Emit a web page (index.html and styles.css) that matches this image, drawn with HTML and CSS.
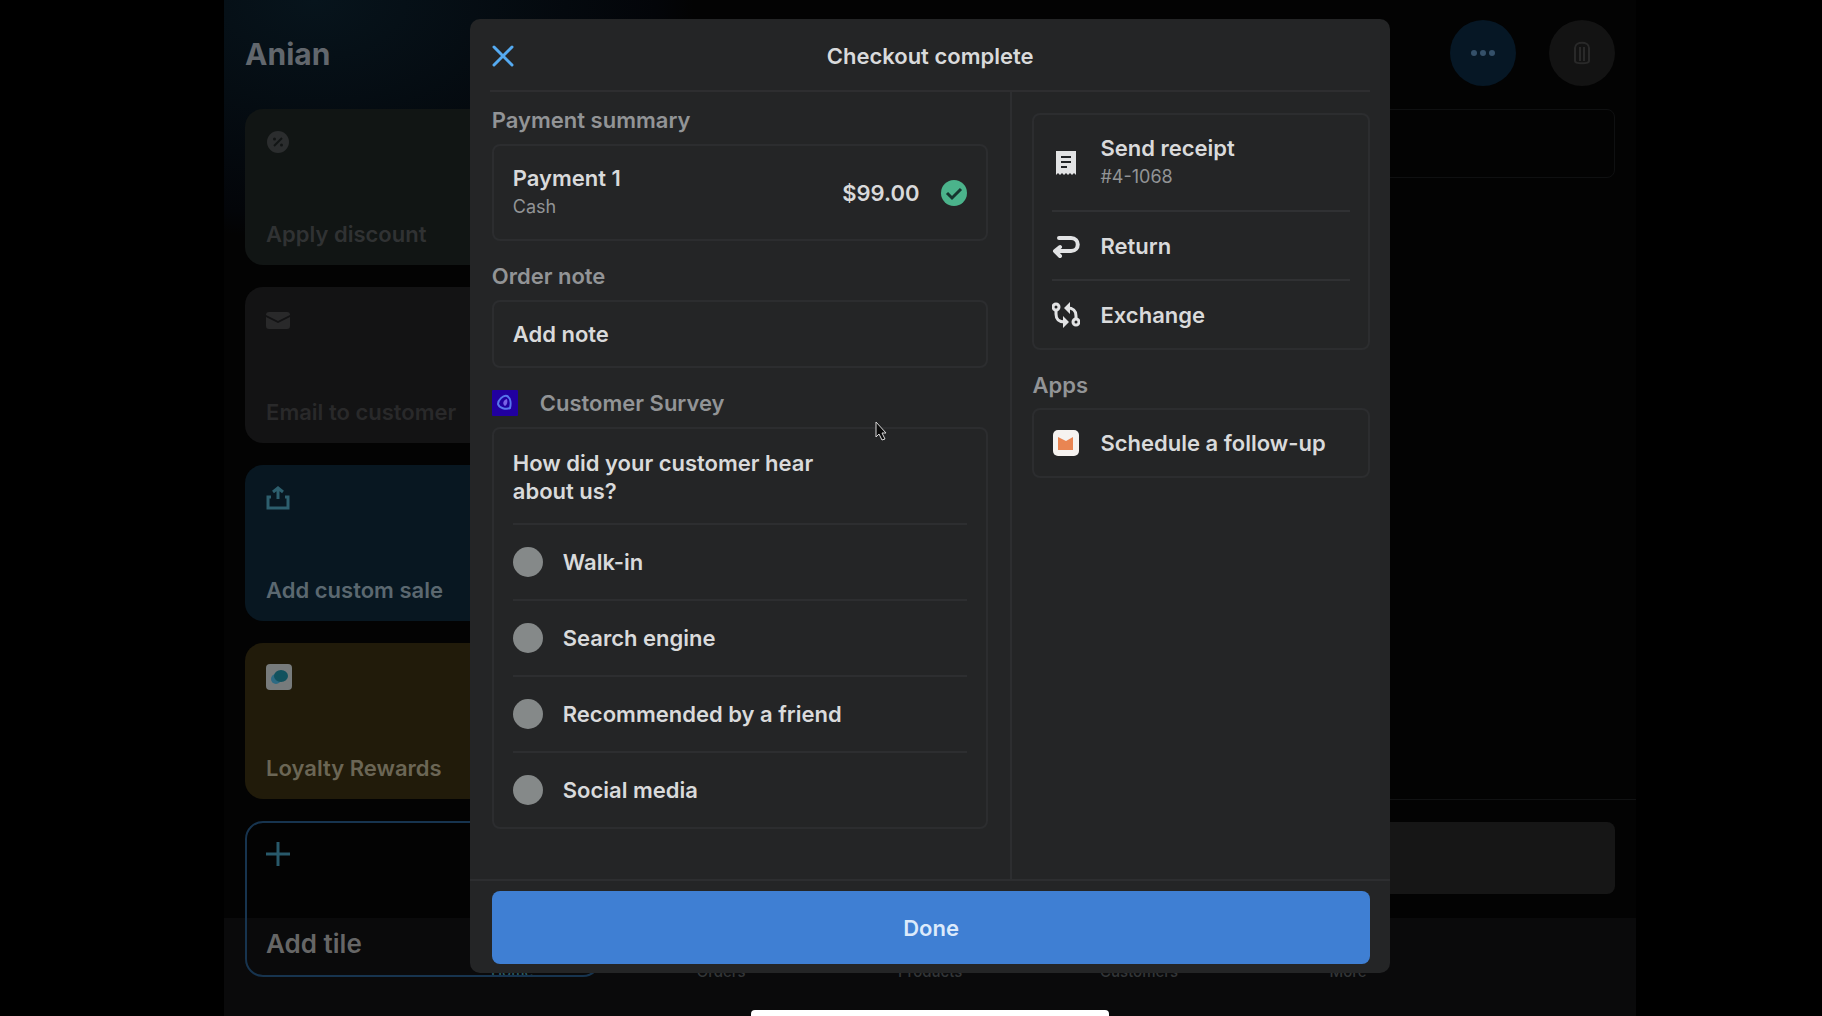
FILE: index.html
```html
<!DOCTYPE html>
<html lang="en">
<head>
  <meta charset="UTF-8">
  <title>Checkout complete</title>
  <link rel="stylesheet" href="styles.css">
</head>
<body>
  <div class="screen">

    <!-- Smart grid -->
    <div class="home">
      <h2 class="store-name">Anian</h2>
      <div class="tiles">
        <button class="tile tile-discount" disabled>
          <svg width="24" height="24" viewBox="0 0 24 24"><circle cx="12" cy="12" r="11" fill="#2b2d2e"/><path d="M8 16l8-8" stroke="#121515" stroke-width="2"/><circle cx="8.500" cy="9" r="1.500" fill="#121515"/><circle cx="15.500" cy="15" r="1.500" fill="#121515"/></svg>
          <span>Apply discount</span>
        </button>
        <button class="tile tile-email" disabled>
          <svg width="24" height="24" viewBox="0 0 24 24"><path d="M0 7c0-2 1-3 3-3h18c2 0 3 1 3 3l-12 6z" fill="#29292a"/><path d="M0 9l12 6 12-6v9c0 2-1 3-3 3H3c-2 0-3-1-3-3z" fill="#29292a"/></svg>
          <span>Email to customer</span>
        </button>
        <button class="tile tile-sale">
          <svg width="24" height="24" viewBox="0 0 24 24" fill="none" stroke="#2d5f6e" stroke-width="3"><path d="M5 11H2v11h20V11h-3"/><path d="M12 13V2M7 6l5-4 5 4"/></svg>
          <span>Add custom sale</span>
        </button>
        <button class="tile tile-loyalty">
          <svg width="26" height="26" viewBox="0 0 26 26"><rect width="26" height="26" rx="4" fill="#777b7c"/><circle cx="10" cy="15" r="5" fill="#2d6a83"/><ellipse cx="15" cy="12" rx="7" ry="6" fill="#12525e"/></svg>
          <span>Loyalty Rewards</span>
        </button>
        <button class="tile tile-add">
          <svg width="24" height="24" viewBox="0 0 24 24"><path d="M12 0v24M0 12h24" stroke="#28596a" stroke-width="3"/></svg>
          <span>Add tile</span>
        </button>
      </div>
    </div>

    <!-- Cart -->
    <div class="cart">
      <div class="cart-actions">
        <button class="round round-more" aria-label="More actions">
          <svg width="26" height="8" viewBox="0 0 26 8" fill="#345069"><circle cx="4" cy="4" r="3"/><circle cx="13" cy="4" r="3"/><circle cx="22" cy="4" r="3"/></svg>
        </button>
        <button class="round" aria-label="Clear cart">
          <svg width="18" height="24" viewBox="0 0 18 24" fill="none" stroke="#292929" stroke-width="2"><path d="M2 7c0-7 14-7 14 0v13c0 3-14 3-14 0zM7 6v14M11 6v14"/></svg>
        </button>
      </div>
      <div class="cart-search"></div>
      <div class="cart-footer"><button class="cart-button" aria-label="Checkout" disabled></button></div>
    </div>

    <!-- Tab bar -->
    <nav class="tabs">
      <a class="active" href="#">Home</a>
      <a href="#">Orders</a>
      <a href="#">Products</a>
      <a href="#">Customers</a>
      <a href="#">More</a>
    </nav>

    <!-- Checkout dialog -->
    <div class="modal" role="dialog" aria-labelledby="modalTitle">
      <header class="modal-header">
        <button class="close" aria-label="Close">
          <svg width="22" height="22" viewBox="0 0 22 22"><path d="M2 2l18 18M20 2L2 20" stroke="#55abf2" stroke-width="3" stroke-linecap="round"/></svg>
        </button>
        <h1 id="modalTitle">Checkout complete</h1>
      </header>

      <div class="modal-body">
        <main class="main">
          <h3>Payment summary</h3>
          <div class="card payment">
            <div class="payment-name">
              <div>Payment 1</div>
              <small>Cash</small>
            </div>
            <div>$99.00</div>
            <svg width="26" height="26" viewBox="0 0 26 26"><circle cx="13" cy="13" r="13" fill="#4bb38b"/><path d="M6 13l5 5 9-9" fill="none" stroke="#16352e" stroke-width="3"/></svg>
          </div>

          <h3>Order note</h3>
          <button class="card note">Add note</button>

          <h3 class="survey-title">
            <svg width="26" height="26" viewBox="0 0 26 26"><rect width="26" height="26" rx="1" fill="#2100a0"/><path d="M6 14c0-4 5-9 9-8 4 2 4 8 3 12-4 2-11 0-12-4z" fill="none" stroke="#5877ed" stroke-width="2"/><path d="M15 9c-4 1-5 5-2 7 2-1 3-4 2-7z" fill="#7a62e6"/></svg>
            Customer Survey
          </h3>
          <fieldset class="card survey">
            <legend>How did your customer hear about us?</legend>
            <label><input type="radio" name="source" value="walk-in">Walk-in</label>
            <label><input type="radio" name="source" value="search">Search engine</label>
            <label><input type="radio" name="source" value="friend">Recommended by a friend</label>
            <label><input type="radio" name="source" value="social">Social media</label>
          </fieldset>
        </main>

        <aside class="side">
          <div class="card actions">
            <button class="receipt">
              <svg width="28" height="28" viewBox="0 0 28 28"><path d="M4 2h20v24l-2-2-2 2-2-2-2 2-2-2-2 2-2-2-2 2-2-2-2 2z" fill="#e2e3e4"/><path d="M9 8h10M9 13h10M9 18h6" stroke="#212426" stroke-width="2"/></svg>
              <span>Send receipt<small>#4-1068</small></span>
            </button>
            <button>
              <svg width="28" height="28" viewBox="0 0 28 28" fill="none" stroke="#e2e3e4" stroke-width="4" stroke-linecap="round" stroke-linejoin="round"><path d="M7 6h12c9 0 9 13 0 13H5"/><path d="M8 15l-5 4 5 5"/></svg>
              <span>Return</span>
            </button>
            <button>
              <svg width="28" height="28" viewBox="0 0 28 28" fill="none" stroke="#e2e3e4" stroke-width="3"><circle cx="4" cy="6" r="3"/><circle cx="24" cy="21" r="3"/><path d="M4 9v4c0 6 3 8 9 8M24 18v-3c0-6-3-8-9-8"/><path d="M11 15l6 6-6 6zM18 1l-6 6 6 6z" fill="#e2e3e4" stroke="none"/></svg>
              <span>Exchange</span>
            </button>
          </div>

          <h3>Apps</h3>
          <div class="card actions apps">
            <button>
              <svg width="28" height="28" viewBox="0 0 28 28"><rect x="1" y="1" width="26" height="26" rx="5" fill="#f6f3f0"/><path d="M6 8l8 4 7-4v13H6z" fill="#e98552"/></svg>
              <span>Schedule a follow-up</span>
            </button>
          </div>
        </aside>
      </div>

      <footer class="modal-footer">
        <button class="done">Done</button>
      </footer>
    </div>

    <svg class="cursor" width="14" height="22" viewBox="0 0 14 22"><path d="M2 2v15l3-3 3 6 3-1-3-6h4z" fill="#0b0b0b" stroke="#d8d8d8" stroke-width="1"/></svg>
    <div class="home-indicator"></div>
  </div>
</body>
</html>
```
FILE: styles.css
```css
* {
  box-sizing: border-box;
}

body {
  margin: 0;
  background: #000;
  color: #d9dadb;
  font-family: Inter, "Liberation Sans", sans-serif;
  font-size: 22px;
  font-weight: 600;
  line-height: 28px;
}

h1, h2, h3 {
  margin: 0;
  font-size: inherit;
  font-weight: 600;
}

button {
  border: 0;
  padding: 0;
  background: none;
  color: inherit;
  font: inherit;
  text-align: left;
}

svg {
  display: block;
  flex: none;
}

.screen {
  position: relative;
  display: flex;
  height: 100vh;
  margin: 0 10.2% 0 12.3%;
  padding: 0 21px;
  overflow: hidden;
  background: #030303 radial-gradient(ellipse 380px 240px at 90px 0, #07141c, #030509 90%, #030303);
}

/* Smart grid */
.home {
  width: 26%;
  padding-top: 36px;
  z-index: 1;
}

.store-name {
  color: #62676d;
  font-size: 30px;
  font-weight: 700;
  line-height: 36px;
}

.tiles {
  display: flex;
  flex-direction: column;
  gap: 22px;
  padding-top: 37px;
}

.tile {
  display: flex;
  flex-direction: column;
  justify-content: space-between;
  height: 156px;
  padding: 21px 21px 17px;
  border-radius: 18px;
}

.tile-discount {
  background: #111514;
  color: #303233;
}

.tile-email {
  background: #131314;
  color: #29292a;
}

.tile-sale {
  background: #081721;
  color: #5b6870;
}

.tile-loyalty {
  background: #211b0a;
  color: #6b6655;
}

.tile-add {
  padding: 19px 19px 17px;
  border: 2px solid #17344f;
  color: #666;
  font-size: 26px;
}

/* Cart */
.cart {
  display: flex;
  flex: 1;
  flex-direction: column;
  padding-top: 20px;
}

.cart-actions {
  display: flex;
  justify-content: flex-end;
  gap: 33px;
}

.round {
  display: flex;
  align-items: center;
  justify-content: center;
  width: 66px;
  height: 66px;
  border-radius: 50%;
  background: #131313;
}

.round-more {
  background: #061725;
}

.cart-search {
  height: 69px;
  margin-top: 23px;
  border: 1px solid #0f1011;
  border-radius: 8px;
}

.cart-footer {
  margin: auto -21px 122px 0;
  padding: 22px 21px 0 0;
  border-top: 1px solid #111213;
}

.cart-button {
  display: block;
  width: 100%;
  height: 72px;
  border-radius: 8px;
  background: #161616;
}

/* Tab bar */
.tabs {
  position: absolute;
  right: 0;
  bottom: 0;
  left: 0;
  display: flex;
  justify-content: center;
  height: 98px;
  padding-top: 40px;
  background: #0a0a0b;
}

.tabs a {
  width: 14.8%;
  color: #333638;
  font-size: 15px;
  font-weight: 500;
  text-align: center;
  text-decoration: none;
}

.tabs .active {
  color: #2b5a63;
}

/* Checkout dialog */
.modal {
  position: absolute;
  top: 19px;
  right: 17.4%;
  bottom: 43px;
  left: 17.4%;
  z-index: 2;
  display: flex;
  flex-direction: column;
  border-radius: 10px;
  background: #242526;
}

.modal-header {
  position: relative;
  margin: 0 20px;
  padding: 23px 0 20px;
  border-bottom: 2px solid #2e2e30;
  text-align: center;
}

.close {
  position: absolute;
  top: 26px;
  left: 2px;
}

.modal-body {
  display: flex;
  flex: 1;
}

.main {
  flex: 1;
  padding: 14px 22px 0;
}

.main h3,
.side h3 {
  color: #929496;
}

.card {
  display: block;
  width: 100%;
  border: 2px solid #2c2d2f;
  border-radius: 8px;
}

.card + h3 {
  margin-top: 21px;
}

small {
  display: block;
  color: #929496;
  font-size: 18px;
  font-weight: 400;
  line-height: 30px;
}

.payment {
  display: flex;
  align-items: center;
  gap: 22px;
  height: 97px;
  margin-top: 10px;
  padding: 0 19px;
}

.payment-name {
  flex: 1;
}

.note {
  height: 68px;
  margin-top: 10px;
  padding: 0 19px;
}

.survey-title {
  display: flex;
  align-items: center;
  gap: 22px;
}

.survey {
  margin: 10px 0 0;
  padding: 20px 19px 0;
}

.survey legend {
  float: left;
  width: 340px;
  margin-bottom: 18px;
  padding: 0;
}

.survey label {
  display: flex;
  clear: both;
  align-items: center;
  gap: 20px;
  height: 76px;
  border-top: 2px solid #2d2e30;
}

.survey input {
  width: 30px;
  height: 30px;
  margin: 0;
  border-radius: 50%;
  background: #858989;
  appearance: none;
}

.survey input:checked {
  background: #3f7fd3;
}

.side {
  width: 380px;
  padding: 21px 20px 0;
  border-left: 2px solid #2d2e30;
}

.actions {
  padding: 0 18px;
}

.actions button {
  display: flex;
  align-items: center;
  gap: 20px;
  width: 100%;
  height: 69px;
}

.actions button + button {
  border-top: 2px solid #303133;
}

.actions .receipt {
  height: 95px;
}

.apps button {
  height: 66px;
}

.side h3 {
  margin-bottom: 9px;
}

.modal-footer {
  padding: 10px 20px 9px 22px;
  border-top: 2px solid #2d2e30;
}

.done {
  width: 100%;
  height: 73px;
  border-radius: 8px;
  background: #3f7fd3;
  color: #dceafb;
  text-align: center;
}

.cursor {
  position: absolute;
  top: 420px;
  left: 46%;
  z-index: 3;
}

.home-indicator {
  position: absolute;
  right: 0;
  bottom: 0;
  left: 0;
  z-index: 3;
  width: 358px;
  height: 6px;
  margin: 0 auto;
  border-radius: 4px 4px 0 0;
  background: #fff;
}
```
